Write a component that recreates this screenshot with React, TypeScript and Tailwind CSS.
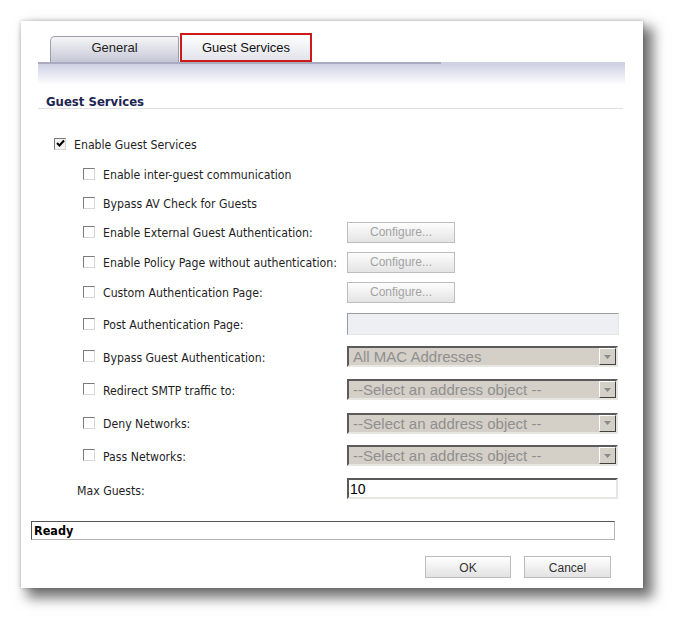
import React from "react";

const tah = { fontFamily: '"DejaVu Sans Condensed", "DejaVu Sans", Tahoma, sans-serif', fontStretch: "condensed" as const };
const ari = { fontFamily: '"Liberation Sans", Arial, sans-serif' };

function Check({ checked = false }: { checked?: boolean }) {
  return (
    <div className={`w-[12px] h-[12px] shrink-0 border border-t-[#7b7b7b] border-l-[#7b7b7b] border-b-[#d6d6d6] border-r-[#d6d6d6] flex items-center justify-center ${checked ? "bg-[#f2f2f2]" : "bg-white"}`}>
      {checked && (
        <svg width="9" height="9" viewBox="0 0 9 9">
          <path d="M1 4 L3.5 6.5 L8 1.5" stroke="#000" strokeWidth="2" fill="none" />
        </svg>
      )}
    </div>
  );
}

function ConfigureBtn() {
  return (
    <div
      className="w-[108px] h-[21px] border border-[#bdbdbd] bg-gradient-to-b from-[#fdfdfd] to-[#e4e4e4] flex items-center justify-center text-[12px] text-[#a3a3a3]"
      style={ari}
    >
      Configure...
    </div>
  );
}

function Select({ text }: { text: string }) {
  return (
    <div className="w-[271px] h-[21px] border-2 border-t-[#5a5a5a] border-l-[#5a5a5a] border-b-[#e8e6e0] border-r-[#e8e6e0] bg-[#d4d0c8] flex items-center justify-between">
      <span className="pl-[4px] text-[15px] text-[#8f8f8f] leading-none" style={ari}>{text}</span>
      <div className="w-[17px] h-[17px] border border-t-[#ffffff] border-l-[#ffffff] border-b-[#404040] border-r-[#404040] bg-[#d4d0c8] flex items-center justify-center">
        <svg width="7" height="4" viewBox="0 0 7 4">
          <path d="M0 0 H7 L3.5 4 Z" fill="#8a8a8a" />
        </svg>
      </div>
    </div>
  );
}

function Row({ h, sub = true, label, checked, control }: { h: number; sub?: boolean; label: string; checked?: boolean; control?: React.ReactNode }) {
  return (
    <div className="flex items-center" style={{ height: h }}>
      <div className={`flex items-center ${sub ? "pl-[62px]" : "pl-[33px]"} w-[326px]`}>
        <Check checked={checked} />
        <span className="ml-[8px] text-[12.2px] text-[#1e1e1e] leading-none pt-[3px]" style={tah}>
          {label}
        </span>
      </div>
      {control}
    </div>
  );
}

export default function App() {
  return (
    <div className="w-[685px] h-[630px] bg-white pt-[21px] pl-[21px]">
      <div className="w-[622px] h-[567px] bg-white flex flex-col shadow-[8px_8px_12px_2px_rgba(0,0,0,0.55),_0_0_4px_rgba(0,0,0,0.25)]">
        {/* tabs */}
        <div className="flex items-end pl-[29px] mt-[12px] h-[29px]">
          <div
            className="w-[129px] h-[26px] rounded-tl-[5px] rounded-tr-[2px] border border-b-0 border-[#9c9cab] bg-gradient-to-b from-[#f6f6f8] to-[#c5c7d5] flex items-center justify-center pb-[3px] text-[13px] text-[#222]"
            style={ari}
          >
            General
          </div>
          <div
            className="ml-[1px] w-[132px] h-[29px] border-2 border-[#cc1a1a] bg-gradient-to-b from-[#ffffff] to-[#e3e4ec] flex items-center justify-center text-[13px] text-[#111]"
            style={ari}
          >
            Guest Services
          </div>
        </div>
        {/* band */}
        <div className="ml-[17px] w-[587px] h-[22px] flex flex-col">
          <div className="flex h-[2px]">
            <div className="w-[403px] bg-[#a9aabf]" />
            <div className="flex-1 bg-[#d0d2e4]" />
          </div>
          <div className="flex-1 bg-gradient-to-b from-[#cfd1e4] to-[#fdfdff]" />
        </div>
        {/* heading */}
        <div className="ml-[17px] w-[585px] h-[25px] border-b border-[#e0e0e0] flex items-end pl-[8px] pb-[0px]">
          <span className="text-[13px] font-bold text-[#1c2552] leading-none" style={tah}>
            Guest Services
          </span>
        </div>
        {/* form */}
        <div className="mt-[20px] flex flex-col">
          <Row h={30} sub={false} checked label="Enable Guest Services" />
          <Row h={30} label="Enable inter-guest communication" />
          <Row h={28} label="Bypass AV Check for Guests" />
          <Row h={30} label="Enable External Guest Authentication:" control={<ConfigureBtn />} />
          <Row h={30} label="Enable Policy Page without authentication:" control={<ConfigureBtn />} />
          <Row h={30} label="Custom Authentication Page:" control={<ConfigureBtn />} />
          <Row
            h={34}
            label="Post Authentication Page:"
            control={<div className="w-[272px] h-[22px] border border-t-[#9a9a9a] border-l-[#9a9a9a] border-b-[#e6e6e6] border-r-[#e6e6e6] bg-[#eeeff3]" />}
          />
          <Row h={31} label="Bypass Guest Authentication:" control={<Select text="All MAC Addresses" />} />
          <Row h={35} label="Redirect SMTP traffic to:" control={<Select text="--Select an address object --" />} />
          <Row h={32} label="Deny Networks:" control={<Select text="--Select an address object --" />} />
          <Row h={33} label="Pass Networks:" control={<Select text="--Select an address object --" />} />
          <div className="flex items-center h-[33px]">
            <div className="pl-[56px] w-[326px]">
              <span className="text-[12.2px] text-[#1e1e1e] leading-none" style={tah}>Max Guests:</span>
            </div>
            <div className="w-[271px] h-[21px] border-2 border-t-[#5a5a5a] border-l-[#5a5a5a] border-b-[#e8e6e0] border-r-[#e8e6e0] bg-white flex items-center">
              <span className="pl-[1px] text-[14px] text-black leading-none" style={ari}>10</span>
            </div>
          </div>
        </div>
        {/* status */}
        <div className="ml-[10px] mt-[16px] w-[584px] h-[19px] border border-t-[#555] border-l-[#555] border-b-[#b4b4b4] border-r-[#b4b4b4] bg-white flex items-center pl-[2px]">
          <span className="text-[12.5px] font-bold text-black leading-none pt-[2px]" style={tah}>Ready</span>
        </div>
        {/* buttons */}
        <div className="flex mt-[16px] pl-[404px] gap-[13px]">
          <div className="w-[86px] h-[22px] border border-[#bcbcbc] bg-gradient-to-b from-[#ffffff] to-[#e2e2e2] flex items-center justify-center text-[12px] text-[#333] pt-[1px]" style={ari}>
            OK
          </div>
          <div className="w-[87px] h-[22px] border border-[#bcbcbc] bg-gradient-to-b from-[#ffffff] to-[#e2e2e2] flex items-center justify-center text-[12px] text-[#333] pt-[1px]" style={ari}>
            Cancel
          </div>
        </div>
      </div>
    </div>
  );
}
